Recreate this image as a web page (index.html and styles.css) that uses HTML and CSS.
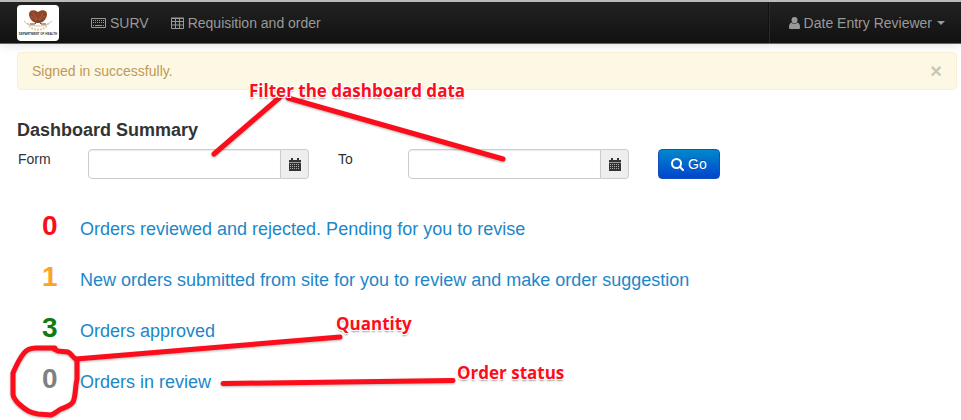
FILE: index.html
```html
<!DOCTYPE html>
<html lang="en">
<head>
<meta charset="utf-8">
<title>Dashboard</title>
<link rel="stylesheet" href="styles.css">
</head>
<body>
<header class="navbar">
  <a class="brand" href="#" aria-label="Department of Health">
    <svg viewBox="0 0 42 36" aria-hidden="true">
      <path d="M11 18c2 9 18 9 20 0" fill="none" stroke="#e6cda0" stroke-width="2" stroke-dasharray="2 1"/>
      <path d="M7 16c4 4 7 5 14 5s10-1 14-5" fill="none" stroke="#c9bca6" stroke-width="1"/>
      <path d="M21 18C15 18 12 13 12 9c0-4 5-5 9-2 4-3 9-2 9 2 0 4-3 9-9 9z" fill="#8f4528"/>
      <path d="M21 16 16 8M21 16l5-8M21 16l-7-5M21 16l7-5" stroke="#a85c38" stroke-width="1"/>
      <path d="M13 19h5l3-4 3 4h5" fill="none" stroke="#5a4030" stroke-width="1"/>
    </svg>
    <span class="brand-name">DEPARTMENT OF HEALTH</span>
  </a>
  <nav class="menu">
    <a class="menu-link" href="#">
      <svg class="icon-keyboard" viewBox="0 0 15 10" aria-hidden="true"><path d="M.5.5h14v9H.5z" fill="none" stroke="currentColor"/><path d="M2 2.500h11M2 4.500h11M2 7.500h1M12 7.500h1" stroke="currentColor" stroke-dasharray="1 1"/><path d="M4 7.500h7" stroke="currentColor"/></svg>
      SURV</a>
    <a class="menu-link" href="#">
      <svg class="icon-table" viewBox="0 0 13 12" aria-hidden="true"><path d="M.5 1.500h12v10H.5zM0 1h13M.5 4.500h12M.5 8h12M4.500 1v10M8.500 1v10" fill="none" stroke="currentColor"/></svg>
      Requisition and order</a>
  </nav>
  <button class="user" type="button">
    <svg class="icon-user" viewBox="0 0 11 12" aria-hidden="true"><path d="M5.500 0a3 3 0 0 1 3 3c0 2-1 3.500-3 3.500s-3-1.500-3-3.500a3 3 0 0 1 3-3zM2.500 5.500c2 2 4 2 6 0C10.500 6 11 8 11 10.500c0 1-.5 1.500-1.500 1.500h-8C.5 12 0 11.500 0 10.500 0 8 .5 6 2.500 5.500z" fill="currentColor"/></svg>
    Date Entry Reviewer
    <span class="caret"></span>
  </button>
</header>
<main class="page">
  <div class="alert" role="status">
    <span>Signed in successfully.</span>
    <button class="close" type="button" aria-label="Close">×</button>
  </div>
  <h1 class="title">Dashboard Summary</h1>
  <form class="filter">
    <label class="filter-label" for="from">Form</label>
    <div class="date">
      <input class="date-input" id="from" type="text">
      <button class="date-button" type="button" aria-label="Pick start date"><svg viewBox="0 0 12 13" aria-hidden="true"><path d="M0 2h2V0h2v2h4V0h2v2h2v11H0z" fill="#333"/><path d="M0 4.500h12" stroke="#999"/><path d="M1 6.500h10M1 8.500h10M1 10.500h10" stroke="#aaa" stroke-dasharray="1 1"/></svg></button>
    </div>
    <label class="filter-label" for="to">To</label>
    <div class="date">
      <input class="date-input" id="to" type="text">
      <button class="date-button" type="button" aria-label="Pick end date"><svg viewBox="0 0 12 13" aria-hidden="true"><path d="M0 2h2V0h2v2h4V0h2v2h2v11H0z" fill="#333"/><path d="M0 4.500h12" stroke="#999"/><path d="M1 6.500h10M1 8.500h10M1 10.500h10" stroke="#aaa" stroke-dasharray="1 1"/></svg></button>
    </div>
    <button class="go" type="submit">
      <svg class="icon-search" viewBox="0 0 13 13" aria-hidden="true"><circle cx="5.500" cy="5.500" r="4.500" fill="none" stroke="#fff" stroke-width="2"/><path d="m9 9 3 3" stroke="#fff" stroke-width="2" stroke-linecap="round"/></svg>
      Go</button>
  </form>
  <ul class="summary">
    <li class="summary-row"><strong class="count rejected">0</strong><a class="status" href="#">Orders reviewed and rejected. Pending for you to revise</a></li>
    <li class="summary-row"><strong class="count new">1</strong><a class="status" href="#">New orders submitted from site for you to review and make order suggestion</a></li>
    <li class="summary-row"><strong class="count approved">3</strong><a class="status" href="#">Orders approved</a></li>
    <li class="summary-row"><strong class="count in-review">0</strong><a class="status" href="#">Orders in review</a></li>
  </ul>
</main>
<div class="notes">
  <svg class="note-lines" width="961" height="420" viewBox="0 0 961 420" aria-hidden="true">
    <path d="M279 98 214 154M288 98l215 61M76 359l264-22M223 383.500l230-3"/>
    <path d="M55 348H36c-5 0-9 1-12 5-5 6-8 13-11 20v21c0 4 3 7 6 10 8 7 12 9 19 10l13 1c4-1 6-4 10-6 5-2 9-3 12-7 3-6 2-15 4-23v-19c-4-2-5-6-9-8l-10-1-4-2z"/>
  </svg>
  <span class="note note-filter">Filter the dashboard data</span>
  <span class="note note-quantity">Quantity</span>
  <span class="note note-status">Order status</span>
</div>
</body>
</html>
```
FILE: styles.css
```css
* { box-sizing: border-box; }
body {
  margin: 0;
  position: relative;
  min-height: 100vh;
  background: #fff;
  color: #333;
  font: 14px/20px "Liberation Sans", Arial, sans-serif;
}
a { text-decoration: none; }
button { font: inherit; cursor: pointer; }
svg { display: block; flex: none; }

.navbar {
  display: flex;
  align-items: center;
  height: 44px;
  padding-left: 17px;
  border-top: 2px solid #bbb;
  border-bottom: 1px solid #666;
  background: linear-gradient(#222, #111);
  box-shadow: 0 1px 10px rgba(0, 0, 0, 0.12);
}
.brand {
  position: relative;
  width: 42px;
  height: 36px;
  border-radius: 4px;
  background: #fff;
}
.brand-name {
  position: absolute;
  bottom: 5px;
  left: 0;
  right: 0;
  color: #333;
  font-size: 3px;
  font-weight: bold;
  line-height: 4px;
  text-align: center;
  white-space: nowrap;
}
.menu { display: flex; gap: 22px; margin-left: 32px; }
.menu-link {
  display: flex;
  align-items: center;
  gap: 4px;
  color: #999;
}
.icon-keyboard { width: 15px; height: 10px; }
.icon-table { width: 13px; height: 12px; }
.user {
  display: flex;
  align-items: center;
  align-self: stretch;
  gap: 4px;
  margin-left: auto;
  padding: 0 16px 0 20px;
  border: 0;
  border-left: 1px solid #111;
  box-shadow: inset 1px 0 #2a2a2a;
  background: none;
  color: #999;
}
.icon-user { width: 11px; height: 12px; }
.caret {
  margin-left: 1px;
  border: 4px solid transparent;
  border-top-color: #999;
  border-bottom: 0;
}

.page { padding: 8px 4px 0 17px; }
.alert {
  display: flex;
  align-items: center;
  justify-content: space-between;
  padding: 8px 14px;
  border: 1px solid #fbeed5;
  border-radius: 4px;
  background: #fcf8e3;
  color: #c09853;
  text-shadow: 0 1px 0 rgba(255, 255, 255, 0.5);
}
.close {
  padding: 0;
  border: 0;
  background: none;
  color: #c9c6b6;
  font-size: 20px;
  font-weight: bold;
}
.title {
  margin: 30px 0 0;
  font-size: 18px;
  line-height: 20px;
}
.filter {
  display: flex;
  align-items: flex-start;
  margin-top: 9px;
}
.filter-label { width: 70px; padding-left: 1px; }
.date { display: flex; width: 221px; margin: 0 29px 0 1px; }
.date + .filter-label { width: 69px; padding-left: 0; }
.date-input {
  flex: 1;
  min-width: 0;
  height: 30px;
  padding: 4px 6px;
  border: 1px solid #ccc;
  border-radius: 4px 0 0 4px;
  box-shadow: inset 0 1px 1px rgba(0, 0, 0, 0.08);
  background: #fff;
  font: inherit;
}
.date-button {
  display: grid;
  place-items: center;
  width: 28px;
  height: 30px;
  padding: 0;
  border: 1px solid #ccc;
  border-left: 0;
  border-radius: 0 4px 4px 0;
  background: #eee;
}
.date-button svg { width: 12px; height: 13px; }
.go {
  display: flex;
  align-items: center;
  gap: 4px;
  height: 30px;
  padding: 0 12px;
  border: 1px solid #1050bd;
  border-radius: 4px;
  background: linear-gradient(#08c, #04c);
  color: #fff;
  text-shadow: 0 -1px 0 rgba(0, 0, 0, 0.25);
}
.icon-search { width: 13px; height: 13px; }

.summary {
  margin: 22px 0 0;
  padding: 0;
  list-style: none;
}
.summary-row {
  display: flex;
  align-items: baseline;
  height: 51px;
  padding-left: 25px;
  line-height: 50px;
}
.count { width: 38px; font-size: 28px; }
.rejected { color: #fc0d1b; }
.new { color: #fda428; }
.approved { color: #107c10; }
.in-review { color: #808080; }
.status { color: #1c87c9; font-size: 18px; }

.notes {
  position: absolute;
  top: 0;
  left: 0;
  pointer-events: none;
}
.note-lines {
  fill: none;
  stroke: #fc0d1b;
  stroke-width: 5;
  stroke-linecap: round;
  stroke-linejoin: round;
  filter: drop-shadow(0 1px 1px rgba(0, 0, 0, 0.3));
}
.note {
  position: absolute;
  color: #fc0d1b;
  font: bold 17px/22px "Open Sans", "Noto Sans", sans-serif;
  white-space: nowrap;
  text-shadow: -1px -1px #fff, 1px -1px #fff, -1px 1px #fff, 1px 1px #fff, 0 2px 2px rgba(0, 0, 0, 0.4);
}
.note-filter { left: 249px; top: 80px; }
.note-quantity { left: 336px; top: 313px; }
.note-status { left: 457px; top: 362px; }
```
